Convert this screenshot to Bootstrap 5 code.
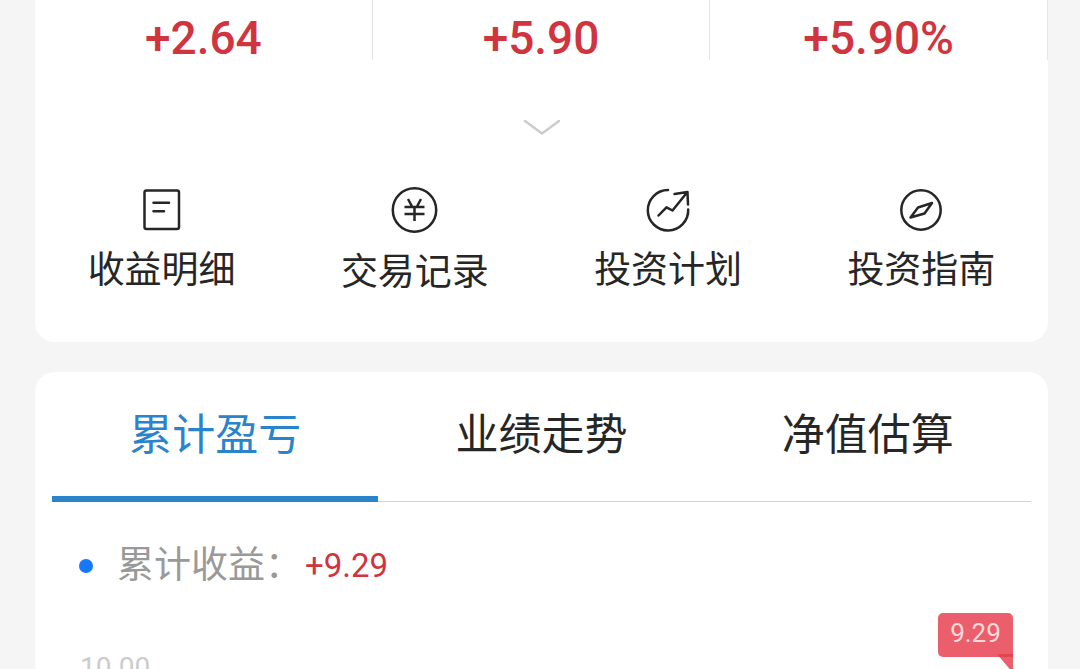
<!DOCTYPE html>
<html lang="zh-CN">
<head>
<meta charset="utf-8">
<meta name="viewport" content="width=device-width, initial-scale=1">
<title>基金持仓</title>
<link href="https://cdn.jsdelivr.net/npm/bootstrap@5.3.0/dist/css/bootstrap.min.css" rel="stylesheet">
<style>
  body { background: #f5f5f5; color: #262626; font-family: "Noto Sans CJK SC", sans-serif; }
  .page { padding: 0 32px 0 35px; gap: 30px; }
  .panel { background: #fff; border-radius: 20px; }
  .panel-top { border-radius: 0 0 20px 20px; padding-bottom: 46px; }
  .num { font-family: Roboto, sans-serif; color: #d0343f; }
  .stat { height: 60px; border-right: 1px solid #e6e6e6; font-size: 46px; font-weight: 500; line-height: 48px; padding-top: 14px; }
  .expand { padding: 59px 0 51px; line-height: 0; color: #ccc; }
  .action { color: #262626; font-size: 37px; line-height: 54px; gap: 9px; }
  svg { fill: none; stroke: currentColor; stroke-width: 2.5; stroke-linecap: round; stroke-linejoin: round; overflow: visible; }
  .tab-row { margin: 0 17px; border-bottom: 1px solid #d4d4d4; }
  .tab-row .nav-link { background: none; color: #262626; font-size: 43px; line-height: 64px; padding: 27px 0 33px; margin-bottom: -1px; border: 0; border-bottom: 6px solid transparent; border-radius: 0; }
  .tab-row .nav-link.active { color: #2a84cb; border-bottom-color: #2a84cb; }
  .legend-row { padding: 32px 44px 0; font-size: 37px; line-height: 56px; color: #999; }
  .legend-name { padding-bottom: 8px; }
  .dot { width: 14px; height: 14px; background: #1677ff; margin-right: 24px; }
  .total { font-size: 33px; margin-left: 3px; }
  .chart { padding: 52px 45px 0; }
  .axis { font-family: Roboto, sans-serif; font-size: 28px; line-height: 36px; color: #ccc; }
  .tip { top: 15px; right: 35px; width: 75px; height: 44px; background: #eb5f6c; color: #ffd9dc; border-radius: 5px 5px 0 5px; font: 26px/40px Roboto, sans-serif; }
  .tip::after { content: ""; position: absolute; top: 41px; right: 0; width: 16px; height: 19px; background: linear-gradient(#e34452 3px, #eb5f6c 3px); clip-path: polygon(0 0, 100% 0, 100% 100%); }
</style>
</head>
<body>
<main class="page d-flex flex-column vh-100 overflow-hidden">
  <section class="panel panel-top flex-shrink-0">
    <div class="row g-0 text-center">
      <div class="col stat num">+2.64</div>
      <div class="col stat num">+5.90</div>
      <div class="col stat num">+5.90%</div>
    </div>
    <button type="button" class="expand btn border-0 d-block w-100" aria-label="展开">
      <svg width="38" height="17" viewBox="0 0 38 17"><path d="M2 2 19 14.500 36 2"/></svg>
    </button>
    <nav class="row g-0 text-center">
      <a href="#" class="col action d-flex flex-column align-items-center text-decoration-none">
        <svg width="44" height="44" viewBox="0 0 44 44"><rect x="4.500" y="3.500" width="34.500" height="38.500" rx="2"/><path d="M13.500 15.700H29M13.500 24.300H24"/></svg>
        <span>收益明细</span>
      </a>
      <a href="#" class="col action d-flex flex-column align-items-center text-decoration-none">
        <svg width="46" height="46" viewBox="0 0 46 46"><circle cx="22.500" cy="23" r="21.700"/><path stroke-linecap="butt" d="M16 12 20 19.500M29 12 25 19.500M12.500 20H32.500M12.500 27H32.500M22.500 20V34"/></svg>
        <span>交易记录</span>
      </a>
      <a href="#" class="col action d-flex flex-column align-items-center text-decoration-none">
        <svg width="44" height="44" viewBox="0 0 44 44"><path d="M22 3A20.200 20.200 0 1 0 42.200 22.500M12.500 28.500 20.500 20.300 26.500 23.500 41 5.500M28.500 7 41.500 5 42 17.500"/></svg>
        <span>投资计划</span>
      </a>
      <a href="#" class="col action d-flex flex-column align-items-center text-decoration-none">
        <svg width="44" height="44" viewBox="0 0 44 44"><circle cx="22" cy="23" r="19.700"/><path d="M11.500 30.500 19 20.500 33 16 25.500 26.500Z"/></svg>
        <span>投资指南</span>
      </a>
    </nav>
  </section>

  <section class="panel rounded-bottom-0 d-flex flex-column flex-fill">
    <div class="tab-row nav nav-fill" role="tablist">
      <button type="button" class="nav-link active col" role="tab" aria-selected="true">累计盈亏</button>
      <button type="button" class="nav-link col" role="tab" aria-selected="false">业绩走势</button>
      <button type="button" class="nav-link col" role="tab" aria-selected="false">净值估算</button>
    </div>
    <div class="legend-row d-flex align-items-center">
      <span class="dot rounded-circle"></span>
      <span class="legend-name">累计收益：</span>
      <span class="num total">+9.29</span>
    </div>
    <div class="chart position-relative">
      <div class="axis">10.00</div>
      <div class="tip position-absolute text-center">9.29</div>
    </div>
  </section>
</main>
<script src="https://cdn.jsdelivr.net/npm/bootstrap@5.3.0/dist/js/bootstrap.bundle.min.js"></script>
</body>
</html>
